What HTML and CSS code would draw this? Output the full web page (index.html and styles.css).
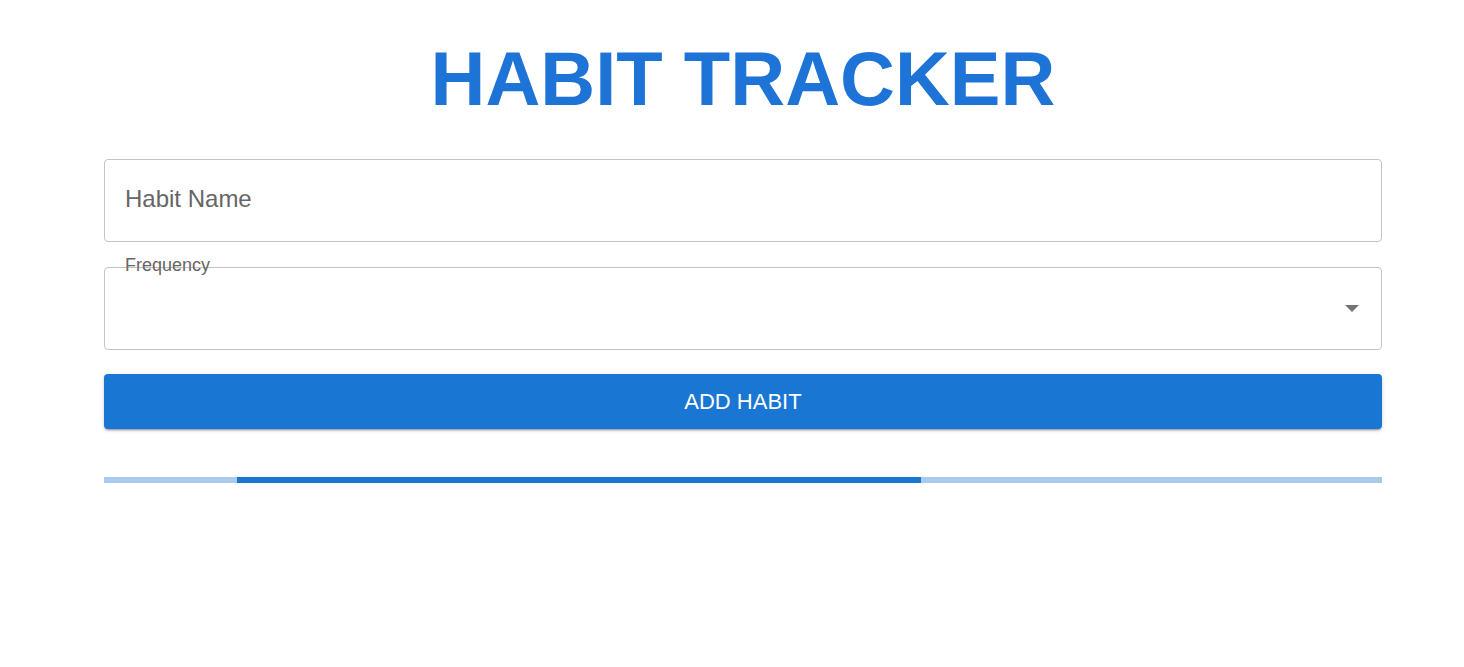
FILE: index.html
```html
<!DOCTYPE html>
<html lang="en">
<head>
<meta charset="utf-8">
<title>Habit Tracker</title>
<link rel="stylesheet" href="styles.css">
</head>
<body>
<main class="container">
  <h1 class="title">HABIT TRACKER</h1>
  <form class="form">
    <input class="text-field" type="text" placeholder="Habit Name">
    <div class="select-field">
      <span class="select-label">Frequency</span>
      <span class="select-arrow"></span>
    </div>
    <button class="add-button" type="button">Add Habit</button>
  </form>
  <div class="progress"><div class="progress-bar"></div></div>
</main>
</body>
</html>
```
FILE: styles.css
```css
html, body {
  margin: 0;
  padding: 0;
  background: #fff;
}
body {
  font-family: "Liberation Sans", Arial, sans-serif;
}
.container {
  width: 1278px;
  margin-left: 104px;
  display: flex;
  flex-direction: column;
}
.title {
  margin: 41px 0 42px;
  font-size: 76px;
  line-height: 76px;
  font-weight: 700;
  text-align: center;
  color: #1e74d6;
}
.form {
  display: flex;
  flex-direction: column;
}
.text-field {
  box-sizing: border-box;
  width: 100%;
  height: 83px;
  margin: 0 0 25px;
  padding: 0 20px 3px;
  border: 1px solid #c4c4c4;
  border-radius: 4px;
  font-family: "Liberation Sans", Arial, sans-serif;
  font-size: 24px;
  color: #222;
  outline: none;
  background: #fff;
}
.text-field::placeholder {
  color: #666;
  opacity: 1;
}
.select-field {
  position: relative;
  box-sizing: border-box;
  height: 83px;
  border: 1px solid #c4c4c4;
  border-radius: 4px;
  display: flex;
  align-items: center;
  justify-content: flex-end;
  padding-right: 22px;
  margin-bottom: 24px;
}
.select-label {
  position: absolute;
  left: 20px;
  top: -12.5px;
  font-size: 18px;
  line-height: 18px;
  color: #666;
}
.select-arrow {
  width: 0;
  height: 0;
  border-left: 7px solid transparent;
  border-right: 7px solid transparent;
  border-top: 7px solid #757575;
}
.add-button {
  height: 55px;
  width: 100%;
  border: 0;
  border-radius: 4px;
  background: #1976d2;
  color: #fff;
  font-family: "Liberation Sans", Arial, sans-serif;
  font-size: 22px;
  text-transform: uppercase;
  box-shadow: 0 3px 1px -2px rgba(0,0,0,0.2), 0 2px 2px 0 rgba(0,0,0,0.14), 0 1px 5px 0 rgba(0,0,0,0.12);
  cursor: pointer;
}
.progress {
  margin-top: 48px;
  height: 6px;
  background: #a7caed;
  display: flex;
}
.progress-bar {
  margin-left: 133px;
  width: 684px;
  background: #1976d2;
}
```
